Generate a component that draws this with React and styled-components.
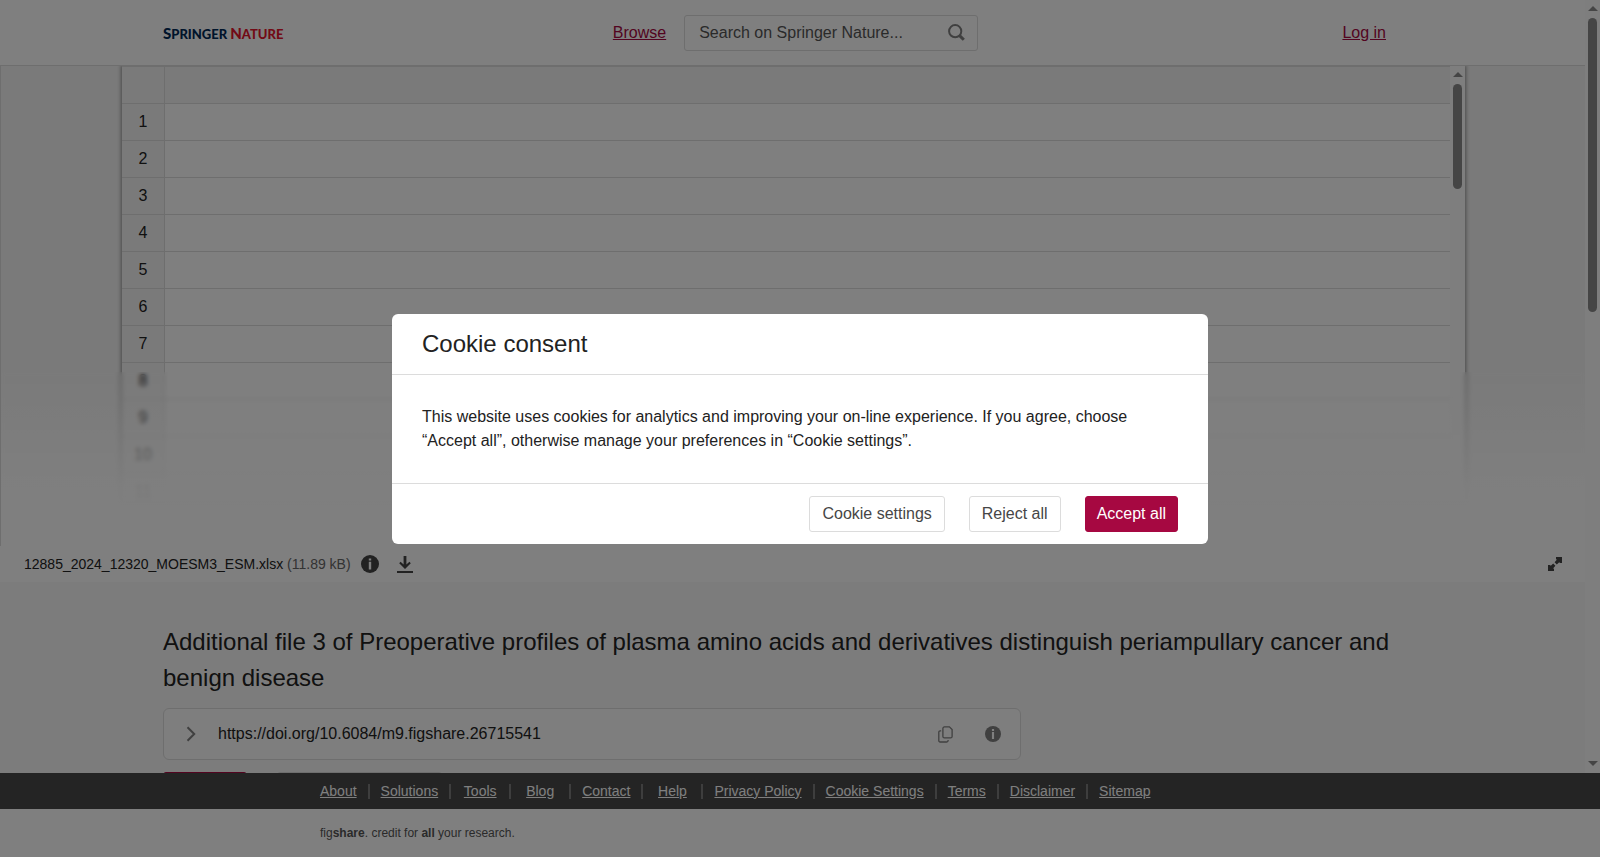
import React from "react";
import styled, { createGlobalStyle, css } from "styled-components";

const BRAND = "#a60841";
const LINE = "#dcdcdc";

const GlobalStyle = createGlobalStyle`
  *, *::before, *::after { box-sizing: border-box; }
  body {
    margin: 0;
    font-family: "Liberation Sans", Arial, Helvetica, sans-serif;
    font-size: 16px;
    line-height: 24px;
    color: #222;
    background: #fff;
  }
  button, input { font: inherit; }
`;

const Page = styled.div`
  display: flex;
  flex-direction: column;
  height: 100vh;
  overflow: hidden;
`;

const Viewport = styled.div`
  flex: 1;
  min-height: 0;
  display: flex;
`;

const Content = styled.div`
  flex: 1;
  min-width: 0;
  overflow: hidden;
  display: flex;
  flex-direction: column;
  background: #f9f9f9;
`;

/* Scrollbars */
const Bar = styled.div`
  flex: none;
  width: 15px;
  display: flex;
  flex-direction: column;
  align-items: center;
  justify-content: space-between;
  padding: 6px 0 7px;
  background: #fcfcfc;
`;

const BarStart = styled.div`
  flex: 1;
  display: flex;
  flex-direction: column;
  align-items: center;
  gap: 7px;
`;

const Thumb = styled.div`
  width: 9px;
  height: ${(p) => p.$length};
  border-radius: 5px;
  background: #8b8b8b;
`;

const Arrow = styled.div`
  border: 5px solid transparent;
  ${(p) =>
    p.$down
      ? css`border-top-color: #8b8b8b; border-bottom: 0;`
      : css`border-bottom-color: #8b8b8b; border-top: 0;`}
`;

function Scrollbar({ length, both }) {
  return (
    <Bar aria-hidden="true">
      <BarStart>
        <Arrow />
        <Thumb $length={length} />
      </BarStart>
      {both && <Arrow $down />}
    </Bar>
  );
}

/* Header */
const Header = styled.header`
  flex: none;
  display: flex;
  align-items: center;
  height: 66px;
  padding: 0 163px;
  background: #fff;
  border-bottom: 1px solid ${LINE};
`;

const HeaderSide = styled.div`
  flex: 1;
  display: flex;
  justify-content: ${(p) => (p.$end ? "flex-end" : "flex-start")};
`;

const Logo = styled.a`
  display: flex;
  gap: 3px;
  padding-top: 2px;
  font-family: Lato, sans-serif;
  font-size: 13px;
  font-weight: 900;
  line-height: 20px;
  text-decoration: none;
`;

const LogoWord = styled.span`
  display: block;
  color: ${(p) => p.$color};
  &::first-letter { font-size: 15px; }
`;

const Nav = styled.nav`
  display: flex;
  align-items: center;
  gap: 18px;
  padding-left: 6px;
`;

const BrandLink = styled.a`
  color: ${BRAND};
  text-decoration: underline;
`;

const LoginLink = styled(BrandLink)`
  margin-right: 36px;
`;

const SearchBox = styled.form`
  display: flex;
  align-items: center;
  width: 294px;
  height: 36px;
  padding: 0 12px 0 14px;
  border: 1px solid ${LINE};
  border-radius: 3px;
`;

const SearchInput = styled.input`
  flex: 1;
  min-width: 0;
  padding: 0;
  border: 0;
  outline: 0;
  background: none;
  &::placeholder { color: #555; opacity: 1; }
`;

const IconButton = styled.button`
  display: flex;
  flex: none;
  padding: 0;
  border: 0;
  background: none;
  color: ${(p) => p.$color || "#444"};
`;

/* File preview */
const Preview = styled.section`
  flex: none;
  position: relative;
  height: 480px;
  padding: 0 120px 0 121px;
  border-left: 1px solid ${LINE};
  background: #f5f5f5;
  overflow: hidden;
`;

const Sheet = styled.div`
  display: flex;
  height: 435px;
  background: #fff;
  box-shadow: 0 0 4px 1px rgba(0, 0, 0, 0.4);
`;

const Grid = styled.div`
  flex: 1;
  min-width: 0;
  overflow: hidden;
  border-top: 1px solid ${LINE};
`;

const GridTable = styled.table`
  width: 100%;
  border-collapse: separate;
  border-spacing: 0;
  table-layout: fixed;
`;

const cell = css`
  height: 37px;
  padding: 0;
  border-bottom: 1px solid ${LINE};
`;

const RowHead = styled.th`
  ${cell}
  width: 43px;
  border-right: 1px solid ${LINE};
  background: #f5f5f5;
  font-weight: 400;
  text-align: center;
`;

const Cell = styled.td`
  ${cell}
  background: ${(p) => (p.$head ? "#f5f5f5" : "#fff")};
`;

const Fade = styled.div`
  position: absolute;
  inset: auto 0 0 0;
  height: 174px;
  backdrop-filter: blur(2px);
  background: linear-gradient(rgba(255, 255, 255, 0), rgba(255, 255, 255, 0.92) 67%, #fff);
`;

const FileBar = styled.div`
  flex: none;
  display: flex;
  align-items: center;
  height: 36px;
  padding: 0 23px 0 24px;
  background: #fff;
  font-size: 14px;
`;

const FileActions = styled.div`
  flex: 1;
  display: flex;
  align-items: center;
  gap: 18px;
`;

const FileInfo = styled.div`
  display: flex;
  align-items: center;
  gap: 10px;
`;

const FileSize = styled.span`
  color: #666;
`;

/* Item details */
const Details = styled.main`
  padding: 42px 163px 0;
`;

const Title = styled.h1`
  margin: 0 0 12px;
  font-size: 24px;
  font-weight: 400;
  line-height: 36px;
`;

const DoiBox = styled.div`
  display: flex;
  align-items: center;
  max-width: 858px;
  height: 52px;
  padding: 0 19px 0 22px;
  border: 1px solid ${LINE};
  border-radius: 6px;
  background: #fcfcfc;
`;

const DoiText = styled.span`
  flex: 1;
  padding-left: 22px;
`;

const DoiIcons = styled.div`
  display: flex;
  align-items: center;
  gap: 32px;
`;

const ActionRow = styled.div`
  display: flex;
  gap: 30px;
  padding-top: 12px;
`;

const ActionButton = styled.button`
  width: ${(p) => (p.$primary ? "84px" : "165px")};
  height: 36px;
  border: 1px solid ${(p) => (p.$primary ? BRAND : LINE)};
  border-radius: 3px;
  background: ${(p) => (p.$primary ? BRAND : "#fff")};
`;

/* Footer */
const Footer = styled.footer`
  flex: none;
`;

const FooterLinks = styled.ul`
  display: flex;
  align-items: center;
  height: 36px;
  margin: 0;
  padding: 0 20%;
  background: #484848;
  list-style: none;
`;

const FooterItem = styled.li`
  flex: none;
  min-width: 60px;
  padding: 0 11px;
  border-right: 2px solid #7c7c7c;
  font-size: 14px;
  line-height: 15px;
  text-align: center;
  &:first-child { min-width: 0; padding-left: 0; }
  &:last-child { border-right: 0; }
`;

const FooterLink = styled.a`
  color: #fff;
`;

const Tagline = styled.p`
  margin: 0;
  padding: 0 20%;
  font-size: 12px;
  line-height: 48px;
  color: #555;
  background: #fff;
`;

/* Cookie dialog */
const Backdrop = styled.div`
  position: fixed;
  inset: 0;
  display: flex;
  align-items: center;
  justify-content: center;
  background: rgba(0, 0, 0, 0.5);
`;

const Dialog = styled.div`
  width: 816px;
  max-width: 100%;
  border-radius: 6px;
  background: #fff;
`;

const DialogTitle = styled.h2`
  margin: 0;
  padding: 12px 30px;
  border-bottom: 1px solid ${LINE};
  font-size: 24px;
  font-weight: 400;
  line-height: 36px;
`;

const DialogText = styled.p`
  margin: 0;
  padding: 30px;
`;

const DialogButtons = styled.div`
  display: flex;
  justify-content: flex-end;
  gap: 24px;
  padding: 12px 30px;
  border-top: 1px solid ${LINE};
`;

const Button = styled.button`
  height: 36px;
  padding: 0 ${(p) => (p.$primary ? "11px" : "12px")};
  border: 1px solid ${(p) => (p.$primary ? BRAND : LINE)};
  border-radius: 3px;
  background: ${(p) => (p.$primary ? BRAND : "#fff")};
  color: ${(p) => (p.$primary ? "#fff" : "#464646")};
`;

/* Icons */
const SearchIcon = () => (
  <svg width="17" height="17" viewBox="0 0 17 17" fill="none" stroke="currentColor">
    <circle cx="7.2" cy="7.2" r="6.1" strokeWidth="2" />
    <path d="M11.6 11.6l4.2 4.2" strokeWidth="3" />
  </svg>
);

const InfoIcon = ({ size }) => (
  <svg width={size} height={size} viewBox="0 0 18 18">
    <circle cx="9" cy="9" r="9" fill="currentColor" />
    <path d="M7.8 3.4h2.4v2.2H7.800zM7.800 6.800h2.400v7.800H7.800z" fill="#fff" />
  </svg>
);

const DownloadIcon = () => (
  <svg width="16" height="18" viewBox="0 0 16 18" fill="currentColor">
    <path d="M6.600 1h2.800v8.400l3-2.700 1.400 1.500L8 14 2.200 8.200l1.400-1.500 3 2.700zM0 16h16v2H0z" />
  </svg>
);

const ExpandIcon = () => (
  <svg width="14" height="14" viewBox="0 0 14 14" fill="currentColor">
    <path d="M8 0h6v6h-2l-.8-.8-2.400 2.200-2.200-2.200L8.800 2.800 8 2zM0 8h2l.8.8 2.400-2.200 2.200 2.200-2.200 2.400.8.800v2H0z" />
  </svg>
);

const ChevronIcon = () => (
  <svg width="10" height="16" viewBox="0 0 10 16" fill="none" stroke="currentColor" strokeWidth="2">
    <path d="M1.500 1.300L8.200 8l-6.700 6.700" />
  </svg>
);

const CopyIcon = () => (
  <svg width="15" height="17" viewBox="0 0 15 17" fill="none" stroke="currentColor" strokeWidth="1.3">
    <path d="M6.4.9h5l2.7 2.7v6.8a1.5 1.5 0 0 1-1.5 1.5H6.400a1.500 1.500 0 0 1-1.500-1.500v-8A1.500 1.500 0 0 1 6.400.9z" />
    <path d="M3.200 4.900H2.100A1.300 1.300 0 0 0 .8 6.200v8.500a1.300 1.300 0 0 0 1.300 1.300h6.500a1.500 1.500 0 0 0 1.500-1.500v-.4" />
  </svg>
);

const ROWS = [1, 2, 3, 4, 5, 6, 7, 8, 9, 10, 11];

const FOOTER_LINKS = [
  "About",
  "Solutions",
  "Tools",
  "Blog",
  "Contact",
  "Help",
  "Privacy Policy",
  "Cookie Settings",
  "Terms",
  "Disclaimer",
  "Sitemap",
];

export default function App() {
  return (
    <>
      <GlobalStyle />
      <Page>
        <Viewport>
          <Content>
            <Header>
              <HeaderSide>
                <Logo href="#home">
                  <LogoWord $color="#002856">SPRINGER</LogoWord>
                  <LogoWord $color="#e5152d">NATURE</LogoWord>
                </Logo>
              </HeaderSide>
              <Nav>
                <BrandLink href="#browse">Browse</BrandLink>
                <SearchBox role="search">
                  <SearchInput
                    type="text"
                    aria-label="Search on Springer Nature"
                    placeholder="Search on Springer Nature..."
                  />
                  <IconButton type="button" aria-label="Search" $color="#808080">
                    <SearchIcon />
                  </IconButton>
                </SearchBox>
              </Nav>
              <HeaderSide $end>
                <LoginLink href="#login">Log in</LoginLink>
              </HeaderSide>
            </Header>

            <Preview>
              <Sheet>
                <Grid>
                  <GridTable>
                    <thead>
                      <tr>
                        <RowHead />
                        <Cell $head />
                      </tr>
                    </thead>
                    <tbody>
                      {ROWS.map((n) => (
                        <tr key={n}>
                          <RowHead scope="row">{n}</RowHead>
                          <Cell />
                        </tr>
                      ))}
                    </tbody>
                  </GridTable>
                </Grid>
                <Scrollbar length="105px" />
              </Sheet>
              <Fade />
            </Preview>

            <FileBar>
              <FileActions>
                <FileInfo>
                  <span>
                    12885_2024_12320_MOESM3_ESM.xlsx <FileSize>(11.89 kB)</FileSize>
                  </span>
                  <IconButton type="button" aria-label="File information">
                    <InfoIcon size={18} />
                  </IconButton>
                </FileInfo>
                <IconButton type="button" aria-label="Download file">
                  <DownloadIcon />
                </IconButton>
              </FileActions>
              <IconButton type="button" aria-label="Full screen">
                <ExpandIcon />
              </IconButton>
            </FileBar>

            <Details>
              <Title>
                Additional file 3 of Preoperative profiles of plasma amino acids and derivatives
                distinguish periampullary cancer and benign disease
              </Title>
              <DoiBox>
                <IconButton type="button" aria-label="Show citation" $color="#808080">
                  <ChevronIcon />
                </IconButton>
                <DoiText>https://doi.org/10.6084/m9.figshare.26715541</DoiText>
                <DoiIcons>
                  <IconButton type="button" aria-label="Copy DOI" $color="#808080">
                    <CopyIcon />
                  </IconButton>
                  <IconButton type="button" aria-label="DOI information" $color="#808080">
                    <InfoIcon size={16} />
                  </IconButton>
                </DoiIcons>
              </DoiBox>
              <ActionRow>
                <ActionButton type="button" aria-label="Cite" $primary />
                <ActionButton type="button" aria-label="Download all" />
              </ActionRow>
            </Details>
          </Content>
          <Scrollbar length="294px" both />
        </Viewport>

        <Footer>
          <FooterLinks>
            {FOOTER_LINKS.map((label) => (
              <FooterItem key={label}>
                <FooterLink href="#footer">{label}</FooterLink>
              </FooterItem>
            ))}
          </FooterLinks>
          <Tagline>
            fig<b>share</b>. credit for <b>all</b> your research.
          </Tagline>
        </Footer>
      </Page>

      <Backdrop>
        <Dialog role="dialog" aria-modal="true" aria-labelledby="cookie-title">
          <DialogTitle id="cookie-title">Cookie consent</DialogTitle>
          <DialogText>
            This website uses cookies for analytics and improving your on-line experience. If you
            agree, choose “Accept all”, otherwise manage your preferences in “Cookie settings”.
          </DialogText>
          <DialogButtons>
            <Button type="button">Cookie settings</Button>
            <Button type="button">Reject all</Button>
            <Button type="button" $primary>
              Accept all
            </Button>
          </DialogButtons>
        </Dialog>
      </Backdrop>
    </>
  );
}
